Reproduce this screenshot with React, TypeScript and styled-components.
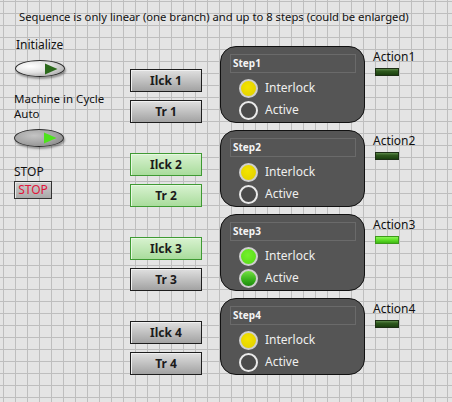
import React from 'react';
import styled, {createGlobalStyle, css} from "styled-components";

const GlobalStyle = createGlobalStyle`
  html, body {
    margin: 0;
    padding: 0;
    overflow: hidden;
  }
`

type LedState = 'off' | 'yellow' | 'green' | 'greenDark';

interface StepData {
  id: number;
  ilckOn: boolean;
  trOn: boolean;
  interlock: LedState;
  active: LedState;
  action: boolean;
}

const steps: StepData[] = [
  {id: 1, ilckOn: false, trOn: false, interlock: 'yellow', active: 'off', action: false},
  {id: 2, ilckOn: true, trOn: true, interlock: 'yellow', active: 'off', action: false},
  {id: 3, ilckOn: true, trOn: false, interlock: 'green', active: 'greenDark', action: true},
  {id: 4, ilckOn: false, trOn: false, interlock: 'yellow', active: 'off', action: false},
];

const App = () => {
  return (
    <>
      <GlobalStyle/>
      <FrontPanel>
        <Title>Sequence is only linear (one branch) and up to 8 steps (could be enlarged)</Title>
        <Body>
          <LeftCol>
            <Caption>Initialize</Caption>
            <Toggle $on={false} $top={7}>
              <svg width="14" height="12" viewBox="0 0 14 12">
                <polygon points="1,0.5 13.5,6 1,11.5" fill="#2c6a1c"/>
              </svg>
            </Toggle>
            <MultiCaption>
              <div>Machine in Cycle</div>
              <div>Auto</div>
            </MultiCaption>
            <Toggle $on={true} $top={8}>
              <svg width="14" height="12" viewBox="0 0 14 12">
                <polygon points="1,0.5 13.5,6 1,11.5" fill="#4ee21c"/>
              </svg>
            </Toggle>
            <StopCaption>STOP</StopCaption>
            <StopButton>STOP</StopButton>
          </LeftCol>
          <StepList>
            {steps.map(s => (
              <StepRow key={s.id}>
                <ButtonStack>
                  <PanelButton $on={s.ilckOn}>Ilck {s.id}</PanelButton>
                  <PanelButton $on={s.trOn}>Tr {s.id}</PanelButton>
                </ButtonStack>
                <StepCluster>
                  <ClusterHeader>Step{s.id}</ClusterHeader>
                  <LedRow>
                    <Led $state={s.interlock}/>
                    <LedLabel>Interlock</LedLabel>
                  </LedRow>
                  <LedRow>
                    <Led $state={s.active}/>
                    <LedLabel>Active</LedLabel>
                  </LedRow>
                </StepCluster>
                <ActionCol>
                  <ActionLabel>Action{s.id}</ActionLabel>
                  <ActionLed $on={s.action}/>
                </ActionCol>
              </StepRow>
            ))}
          </StepList>
        </Body>
      </FrontPanel>
    </>
  );
};

const FrontPanel = styled.div`
  width: 452px;
  height: 402px;
  box-sizing: border-box;
  padding-top: 9px;
  background-color: #e4e4e4;
  background-image:
    linear-gradient(to right, #bebebe 1px, transparent 1px),
    linear-gradient(to bottom, #bebebe 1px, transparent 1px);
  background-size: 12px 12px;
  background-position: 3px 1px;
  font-family: "Segoe UI", "Noto Sans", "Open Sans", sans-serif;
  color: #111;
  overflow: hidden;
`
const Title = styled.div`
  padding-left: 19px;
  font-size: 11.25px;
  line-height: 16px;
  white-space: nowrap;
`
const Body = styled.div`
  display: flex;
  margin-top: 12px;
`
const LeftCol = styled.div`
  width: 116px;
  padding-left: 14px;
  display: flex;
  flex-direction: column;
  align-items: flex-start;
`
const Caption = styled.div`
  font-size: 12px;
  line-height: 16px;
  padding-left: 2px;
`
const MultiCaption = styled.div`
  font-size: 11.5px;
  line-height: 15px;
  margin-top: 14px;
`
const StopCaption = styled.div`
  font-size: 12px;
  line-height: 16px;
  margin-top: 17px;
`
const Toggle = styled.div<{$on:boolean; $top:number}>`
  width: 50px;
  height: 17px;
  box-sizing: border-box;
  margin-top: ${({$top}) => $top}px;
  margin-left: ${({$on}) => $on ? '0' : '1px'};
  border-radius: 50%;
  border: 1px solid #2a2a2a;
  display: flex;
  align-items: center;
  justify-content: flex-end;
  padding-right: 6px;
  box-shadow: 1px 2px 2px rgba(0,0,0,0.35);
  ${({$on}) => $on ? css`
    height: 18px;
    background: radial-gradient(ellipse at 40% 35%, #c4c4c4 0%, #a2a2a2 55%, #7c7c7c 100%);
  ` : css`
    background: radial-gradient(ellipse at 30% 35%, #ffffff 0%, #e2e2e2 45%, #a8a8a8 85%, #888 100%);
  `}
  svg {
    display: block;
  }
`
const StopButton = styled.div`
  margin-top: 1px;
  width: 38px;
  height: 18px;
  box-sizing: border-box;
  border: 1px solid #333;
  background: linear-gradient(to bottom, #cfcfcf, #a9a9a9);
  box-shadow: inset 1px 1px 0 #e8e8e8;
  color: #e0163a;
  font-size: 12px;
  line-height: 16px;
  text-align: center;
`
const StepList = styled.div`
  display: flex;
  flex-direction: column;
  gap: 7px;
  padding-top: 9px;
`
const StepRow = styled.div`
  display: flex;
  height: 77px;
`
const ButtonStack = styled.div`
  width: 72px;
  margin-right: 18px;
  display: flex;
  flex-direction: column;
  justify-content: flex-end;
  gap: 8px;
`
const PanelButton = styled.div<{$on:boolean}>`
  height: 23px;
  box-sizing: border-box;
  border: 1px solid ${({$on}) => $on ? '#3f9a33' : '#1e1e1e'};
  background: ${({$on}) => $on
    ? 'linear-gradient(to bottom, #d8f2d0, #a9dc9c)'
    : 'linear-gradient(to bottom, #e0e0e0, #a2a2a2)'};
  box-shadow: inset 1px 1px 0 ${({$on}) => $on ? '#e8f8e2' : '#f0f0f0'};
  font-size: 12px;
  font-weight: bold;
  line-height: 21px;
  text-align: center;
  color: #1b1b1b;
`
const StepCluster = styled.div`
  width: 145px;
  height: 77px;
  box-sizing: border-box;
  border: 1px solid #111;
  border-radius: 16px;
  background: #555;
  padding: 7px 8px 0 9px;
`
const ClusterHeader = styled.div`
  height: 19px;
  box-sizing: border-box;
  margin-bottom: 4px;
  border: 1px solid #6a6a6a;
  padding-left: 2px;
  font-size: 10px;
  font-weight: bold;
  line-height: 17px;
  color: #f4f4f4;
`
const LedRow = styled.div`
  height: 22px;
  display: flex;
  align-items: center;
  padding-left: 9px;
  gap: 7px;
`
const ledFill = {
  off: '#4b4b4b',
  yellow: 'radial-gradient(circle at 45% 40%, #f4e400 0%, #e6d400 70%, #cdbb00 100%)',
  green: 'radial-gradient(circle at 45% 40%, #74f02c 0%, #5ee11b 70%, #46c412 100%)',
  greenDark: 'linear-gradient(to bottom, #74e042 0%, #3ab41c 55%, #1e8a0e 100%)',
};
const Led = styled.span<{$state:LedState}>`
  width: 19px;
  height: 19px;
  box-sizing: border-box;
  border-radius: 50%;
  border: 2px solid ${({$state}) => $state === 'off' ? '#eaeaea' : '#cfcfcf'};
  background: ${({$state}) => ledFill[$state]};
  flex-shrink: 0;
`
const LedLabel = styled.span`
  font-size: 12px;
  color: #efefef;
  line-height: 16px;
`
const ActionCol = styled.div`
  margin-left: 8px;
  padding-top: 3px;
  display: flex;
  flex-direction: column;
  align-items: flex-start;
`
const ActionLabel = styled.div`
  font-size: 12px;
  line-height: 16px;
`
const ActionLed = styled.div<{$on:boolean}>`
  margin-top: 3px;
  margin-left: 2px;
  width: 24px;
  height: 8px;
  box-sizing: border-box;
  border: 1px solid ${({$on}) => $on ? '#3c9a1a' : '#1c2e14'};
  background: ${({$on}) => $on
    ? 'linear-gradient(to bottom, #8cf55a 0%, #62e22a 45%, #3fb814 100%)'
    : 'linear-gradient(to bottom, #5e8a4c 0%, #2f5a1e 35%, #1a3e0e 100%)'};
`

export default App;
